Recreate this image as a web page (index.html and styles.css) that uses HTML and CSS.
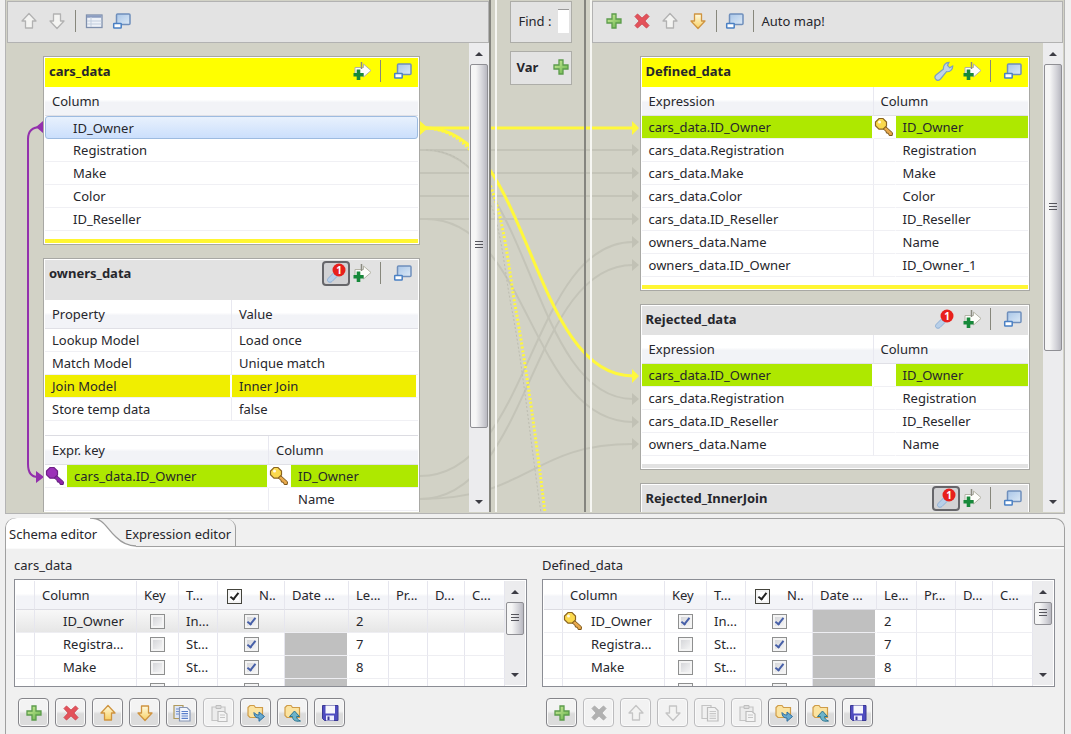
FILE: index.html
```html
<!DOCTYPE html>
<html lang="en">
<head>
    <meta charset="UTF-8">
    <meta name="viewport" content="width=device-width, initial-scale=1.0">
    <title>Map editor</title>
    <link rel="stylesheet" href="styles.css">
</head>
<body>
    <!-- icon set -->
    <svg class="sprite" aria-hidden="true">
        <defs>
            <linearGradient id="gGold" x1="0" y1="0" x2="0" y2="1">
                <stop offset="0" stop-color="#fffbe0"/><stop offset="1" stop-color="#f8cf62"/>
            </linearGradient>
            <linearGradient id="gBlue" x1="0" y1="0" x2="1" y2="1">
                <stop offset="0" stop-color="#a9c6e8"/><stop offset="1" stop-color="#dce9f6"/>
            </linearGradient>
            <linearGradient id="gGreen" x1="0" y1="0" x2="1" y2="1">
                <stop offset="0" stop-color="#d6f0a0"/><stop offset="1" stop-color="#5fb045"/>
            </linearGradient>
        </defs>
        <symbol id="plus" viewBox="0 0 20 20">
            <path d="M8 3h4v5h5v4h-5v5H8v-5H3V8h5z" fill="url(#gGreen)" stroke="#5c9c4c" stroke-width="1.3"/>
        </symbol>
        <symbol id="cross" viewBox="0 0 20 20">
            <path d="M3 5.500L5.500 3 10 7.200 14.500 3 17 5.500 12.800 10 17 14.500 14.500 17 10 12.800 5.500 17 3 14.500 7.200 10z" fill="#e4525a" stroke="#cf4650" stroke-width="1"/>
        </symbol>
        <symbol id="up" viewBox="0 0 20 20">
            <path d="M10 2.500L17 10h-3.500v7h-7v-7H3z" fill="#f4f4f2" stroke="#b2b2b2" stroke-width="1.300" stroke-linejoin="round"/>
        </symbol>
        <symbol id="down" viewBox="0 0 20 20">
            <path d="M10 17.500L3 10h3.500V3h7v7H17z" fill="#f4f4f2" stroke="#b2b2b2" stroke-width="1.300" stroke-linejoin="round"/>
        </symbol>
        <symbol id="up-gold" viewBox="0 0 20 20">
            <path d="M10 2.500L17 10h-3.500v7h-7v-7H3z" fill="url(#gGold)" stroke="#cf9440" stroke-width="1.300" stroke-linejoin="round"/>
        </symbol>
        <symbol id="down-gold" viewBox="0 0 20 20">
            <path d="M10 17.500L3 10h3.500V3h7v7H17z" fill="url(#gGold)" stroke="#cf9440" stroke-width="1.300" stroke-linejoin="round"/>
        </symbol>
        <symbol id="grid" viewBox="0 0 20 20">
            <rect x="2.500" y="4" width="15.500" height="12.500" fill="#eef2f8" stroke="#7f90ad" stroke-width="1.300"/>
            <path d="M3 5.500h14.500" stroke="#8b9cc0" stroke-width="2.500"/>
            <path d="M7 6v10M3 10h14.500M3 13h14.500" stroke="#c3cede" stroke-width="1"/>
        </symbol>
        <symbol id="restore" viewBox="0 0 20 20">
            <rect x="4.500" y="3" width="13.500" height="10.500" rx="1" fill="url(#gBlue)" stroke="#6f8fbc" stroke-width="1.500"/>
            <rect x="1.700" y="12.500" width="7.500" height="4.500" rx=".5" fill="#fff" stroke="#4a80c4" stroke-width="1.500"/>
        </symbol>
        <symbol id="addout" viewBox="0 0 20 20">
            <path d="M3 6.500h8.500V3L19 9.500l-7.500 6.500v-3.500H3z" fill="#fdfdfa" stroke="#b3b3a6" stroke-width="1"/>
            <path d="M9.500 1v7" stroke="#8b8b80" stroke-width="1.500"/>
            <path d="M6.500 8.500v10.500M1.500 13.700h10" stroke="#16893a" stroke-width="3.600"/>
        </symbol>
        <symbol id="wrench" viewBox="0 0 20 20">
            <path d="M2 18.500C.5 17 .5 15.500 2 14L9.500 8C9 4.500 11.500 1.300 15 1.300l-1.500 3.200 2.200 2.300 3-1.800c.3 3.500-2.900 6.200-6.200 5.700L6.500 18c-1.500 1.600-3 2-4.500.5z" fill="#c0d4e8" stroke="#7d9fbe" stroke-width="1.200"/>
        </symbol>
        <symbol id="badge" viewBox="0 0 20 20">
            <path d="M2 18.500c-1-1-.5-2.500.5-3.500l5-5 3.500 3.500-5 5c-1 1-3 1-4 0z" fill="#b8cfe8" stroke="#8fb0d6" stroke-width="1"/>
            <circle cx="13" cy="7" r="6.500" fill="#e8201c"/>
        </symbol>
        <symbol id="key" viewBox="0 0 20 20">
            <path d="M8.500 11.500l2.500-2.500 7.500 6.800-.3 2.700h-3l-.8-2.200-1.900-.2-.6-2z" fill="#e9a94c" stroke="#7b5618" stroke-width="1"/>
            <path d="M5 1.500h4L12.500 5v4L9 12.200H5L1.500 8.700V5z" fill="#fbd94d" stroke="#8a6420" stroke-width="1.200"/>
            <circle cx="5.500" cy="5" r="1.500" fill="#fffbe8"/>
        </symbol>
        <symbol id="key-purple" viewBox="0 0 20 20">
            <path d="M8.500 11.500l2.500-2.500 7.500 6.800-.3 2.700h-3l-.8-2.200-1.900-.2-.6-2z" fill="#8f24ac" stroke="#5d1c7a" stroke-width="1"/>
            <path d="M5 1.500h4L12.500 5v4L9 12.200H5L1.500 8.700V5z" fill="#9b30b8" stroke="#6d2088" stroke-width="1.200"/>
        </symbol>
        <symbol id="copy" viewBox="0 0 20 20">
            <path d="M2 2.500h9v13H2z" fill="#dfe7f6" stroke="#b09a5c" stroke-width="1.200"/>
            <path d="M4 6h3M4 8.500h3M4 11h3" stroke="#6e8ed0" stroke-width="1.200"/>
            <path d="M7.500 4.500H15l3 3v10.500H7.500z" fill="#f2f6fd" stroke="#8796b4" stroke-width="1.200"/>
            <path d="M9.500 8.500h6.500M9.500 10.700h6.500M9.500 13h6.500M9.500 15.300h6.500" stroke="#5a7fcb" stroke-width="1.200"/>
        </symbol>
        <symbol id="copy-off" viewBox="0 0 20 20">
            <path d="M2 2.500h9v13H2z" fill="#f0f0f0" stroke="#c4c4c4" stroke-width="1.200"/>
            <path d="M7.500 4.500H15l3 3v10.500H7.500z" fill="#f2f2f2" stroke="#bdbdbd" stroke-width="1.200"/>
            <path d="M9.500 8.500h6.500M9.500 10.700h6.500M9.500 13h6.500M9.500 15.300h6.500" stroke="#c9c9c9" stroke-width="1.200"/>
        </symbol>
        <symbol id="paste-off" viewBox="0 0 20 20">
            <path d="M3 4h13v13.500H3z" fill="#ececec" stroke="#c4c4c4" stroke-width="1.200"/>
            <path d="M7 2.500h5v3H7z" fill="#ddd" stroke="#bebebe" stroke-width="1"/>
            <path d="M9 8.500h6l3 2.500v7.500H9z" fill="#f4f4f4" stroke="#bdbdbd" stroke-width="1.200"/>
            <path d="M11 12h5M11 14.500h5" stroke="#c6c6c6" stroke-width="1.200"/>
        </symbol>
        <symbol id="import" viewBox="0 0 20 20">
            <path d="M2 4.500L4 2.500h4l1.500 2H16.500v10H4L2 12.500z" fill="#fbe3a0" stroke="#cf9c48" stroke-width="1.200"/>
            <path d="M8 9.500c0 4 2 5.500 5 5.500v3.300l5.500-4.800-5.500-4.500v3c-2.500 0-3.500-.8-5-2.500z" fill="#67a9cf" stroke="#2f6f9f" stroke-width="1"/>
        </symbol>
        <symbol id="export" viewBox="0 0 20 20">
            <path d="M2 4.500L4 2.500h4l1.500 2H16.500v10H4L2 12.500z" fill="#fbe3a0" stroke="#cf9c48" stroke-width="1.200"/>
            <path d="M17.500 18c-6 1-8-1.500-8-4.500H6.500L11.500 8l5 5.500h-3c0 2 1.500 3.500 4 4.500z" fill="#6cb3c9" stroke="#2c7590" stroke-width="1"/>
        </symbol>
        <symbol id="save" viewBox="0 0 20 20">
            <path d="M2.500 2.500h15.500v15H4.500l-2-2z" fill="#4f4cc0" stroke="#3a3894" stroke-width="1"/>
            <path d="M5.500 2.500h9.500v8h-9.500z" fill="#f6f6fc"/>
            <path d="M6 12.500h8v5H6z" fill="#eef"/>
            <path d="M7.500 13.500h2v3.500h-2z" fill="#3a3894"/>
        </symbol>
        <symbol id="tri-up" viewBox="0 0 8 4"><path d="M4 0l4 4H0z" fill="#3c3c44"/></symbol>
        <symbol id="tri-down" viewBox="0 0 8 4"><path d="M0 0h8L4 4z" fill="#3c3c44"/></symbol>
    </svg>

    <main class="mapper">
        <!-- links between the tables -->
        <svg class="wires" viewBox="6 0 1058 513" preserveAspectRatio="none" aria-hidden="true">
            <defs>
                <marker id="headGray" markerUnits="userSpaceOnUse" markerWidth="7" markerHeight="12" refX="1" refY="6" orient="0">
                    <path d="M0 0l7 6-7 6z" fill="#c1c1b5"/>
                </marker>
                <marker id="headYellow" markerUnits="userSpaceOnUse" markerWidth="7" markerHeight="14" refX="1" refY="7" orient="0">
                    <path d="M0 0l7 7-7 7z" fill="#fff83c"/>
                </marker>
            </defs>
            <g class="wire gray">
                <path d="M420 150H633"/>
                <path d="M420 173H633"/>
                <path d="M420 196H633"/>
                <path d="M420 219H633"/>
                <path d="M426 150C530 150 530 399 633 399"/>
                <path d="M426 219C530 219 530 422 633 422"/>
                <path d="M420 476C530 476 530 242 633 242"/>
                <path d="M420 499C530 499 530 265 633 265"/>
                <path d="M420 499C530 499 530 444 633 444"/>
            </g>
            <path class="wire gray-dots" d="M426 150C500 152 500 250 511 305S529 430 541 513"/>
            <g class="wire yellow">
                <path d="M420 128H633"/>
                <path d="M426 128C530 128 530 376 633 376"/>
            </g>
            <path class="wire yellow-dots" d="M426 128C500 132 505 250 515 305S535 430 545 513"/>
            <path d="M420 121l8 7-8 7z" fill="#fff83c"/>
            <path class="wire purple" d="M41 127C33 127 28 131 28 139V464C28 473 31 477 38 477"/>
            <path d="M43 121v12l-7-6zM36 471l8 6-8 6z" fill="#9330ad"/>
        </svg>

        <section class="pane inputs">
            <div class="toolbar">
                <button class="tool" aria-label="Move up"><svg><use href="#up"/></svg></button>
                <button class="tool" aria-label="Move down"><svg><use href="#down"/></svg></button>
                <span class="sep"></span>
                <button class="tool" aria-label="Show columns"><svg><use href="#grid"/></svg></button>
                <button class="tool" aria-label="Minimize tables"><svg><use href="#restore"/></svg></button>
            </div>
            <div class="scroll-area">
                <div class="cards">
                    <article class="card selected">
                        <header class="card-title">
                            <h2>cars_data</h2>
                            <button class="tool" aria-label="Add column"><svg><use href="#addout"/></svg></button>
                            <span class="sep"></span>
                            <button class="tool" aria-label="Minimize"><svg><use href="#restore"/></svg></button>
                        </header>
                        <table class="fields">
                            <thead><tr><th>Column</th></tr></thead>
                            <tbody class="indent">
                                <tr class="active"><td>ID_Owner</td></tr>
                                <tr><td>Registration</td></tr>
                                <tr><td>Make</td></tr>
                                <tr><td>Color</td></tr>
                                <tr><td>ID_Reseller</td></tr>
                            </tbody>
                        </table>
                        <div class="strip"></div>
                    </article>

                    <article class="card">
                        <header class="card-title tall">
                            <h2>owners_data</h2>
                            <button class="tool pressed" aria-label="Settings"><svg viewBox="0 0 20 20"><use href="#badge"/><text x="13" y="11" text-anchor="middle" class="badge-text">1</text></svg></button>
                            <button class="tool" aria-label="Add column"><svg><use href="#addout"/></svg></button>
                            <span class="sep"></span>
                            <button class="tool" aria-label="Minimize"><svg><use href="#restore"/></svg></button>
                        </header>
                        <table class="fields props">
                            <colgroup><col class="c-prop"><col></colgroup>
                            <thead><tr><th>Property</th><th>Value</th></tr></thead>
                            <tbody>
                                <tr><td>Lookup Model</td><td>Load once</td></tr>
                                <tr><td>Match Model</td><td>Unique match</td></tr>
                                <tr class="changed"><td>Join Model</td><td>Inner Join</td></tr>
                                <tr><td>Store temp data</td><td>false</td></tr>
                            </tbody>
                        </table>
                        <table class="fields keys">
                            <colgroup><col class="c-icon"><col class="c-key"><col class="c-icon"><col></colgroup>
                            <thead><tr><th colspan="2">Expr. key</th><th colspan="2">Column</th></tr></thead>
                            <tbody>
                                <tr>
                                    <td class="icon"><svg><use href="#key-purple"/></svg></td>
                                    <td class="hit">cars_data.ID_Owner</td>
                                    <td class="icon"><svg><use href="#key"/></svg></td>
                                    <td class="hit">ID_Owner</td>
                                </tr>
                                <tr><td class="icon"></td><td></td><td class="icon"></td><td>Name</td></tr>
                            </tbody>
                        </table>
                    </article>
                </div>
                <div class="scrollbar">
                    <svg><use href="#tri-up"/></svg>
                    <div class="track"><div class="thumb long"><i></i></div></div>
                    <svg><use href="#tri-down"/></svg>
                </div>
            </div>
        </section>

        <div class="sash"></div>

        <section class="pane vars">
            <div class="box find">
                <label for="find">Find :</label>
                <input type="text" id="find">
            </div>
            <div class="box var">
                <h2>Var</h2>
                <button class="tool" aria-label="Add variable"><svg><use href="#plus"/></svg></button>
            </div>
        </section>

        <div class="sash"></div>

        <section class="pane outputs">
            <div class="toolbar">
                <button class="tool" aria-label="Add output"><svg><use href="#plus"/></svg></button>
                <button class="tool" aria-label="Remove output"><svg><use href="#cross"/></svg></button>
                <button class="tool" aria-label="Move up"><svg><use href="#up"/></svg></button>
                <button class="tool" aria-label="Move down"><svg><use href="#down-gold"/></svg></button>
                <span class="sep"></span>
                <button class="tool" aria-label="Minimize tables"><svg><use href="#restore"/></svg></button>
                <span class="sep"></span>
                <button class="tool">Auto map!</button>
            </div>
            <div class="scroll-area">
                <div class="cards">
                    <article class="card selected">
                        <header class="card-title">
                            <h2>Defined_data</h2>
                            <button class="tool" aria-label="Settings"><svg><use href="#wrench"/></svg></button>
                            <button class="tool" aria-label="Add column"><svg><use href="#addout"/></svg></button>
                            <span class="sep"></span>
                            <button class="tool" aria-label="Minimize"><svg><use href="#restore"/></svg></button>
                        </header>
                        <table class="fields">
                            <colgroup><col class="c-expr"><col class="c-icon"><col></colgroup>
                            <thead><tr><th>Expression</th><th colspan="2">Column</th></tr></thead>
                            <tbody>
                                <tr><td class="hit">cars_data.ID_Owner</td><td class="icon"><svg><use href="#key"/></svg></td><td class="hit">ID_Owner</td></tr>
                                <tr><td>cars_data.Registration</td><td class="icon"></td><td>Registration</td></tr>
                                <tr><td>cars_data.Make</td><td class="icon"></td><td>Make</td></tr>
                                <tr><td>cars_data.Color</td><td class="icon"></td><td>Color</td></tr>
                                <tr><td>cars_data.ID_Reseller</td><td class="icon"></td><td>ID_Reseller</td></tr>
                                <tr><td>owners_data.Name</td><td class="icon"></td><td>Name</td></tr>
                                <tr><td>owners_data.ID_Owner</td><td class="icon"></td><td>ID_Owner_1</td></tr>
                            </tbody>
                        </table>
                        <div class="strip"></div>
                    </article>

                    <article class="card">
                        <header class="card-title">
                            <h2>Rejected_data</h2>
                            <button class="tool" aria-label="Settings"><svg viewBox="0 0 20 20"><use href="#badge"/><text x="13" y="11" text-anchor="middle" class="badge-text">1</text></svg></button>
                            <button class="tool" aria-label="Add column"><svg><use href="#addout"/></svg></button>
                            <span class="sep"></span>
                            <button class="tool" aria-label="Minimize"><svg><use href="#restore"/></svg></button>
                        </header>
                        <table class="fields">
                            <colgroup><col class="c-expr"><col class="c-icon"><col></colgroup>
                            <thead><tr><th>Expression</th><th colspan="2">Column</th></tr></thead>
                            <tbody>
                                <tr><td class="hit">cars_data.ID_Owner</td><td class="icon"></td><td class="hit">ID_Owner</td></tr>
                                <tr><td>cars_data.Registration</td><td class="icon"></td><td>Registration</td></tr>
                                <tr><td>cars_data.ID_Reseller</td><td class="icon"></td><td>ID_Reseller</td></tr>
                                <tr><td>owners_data.Name</td><td class="icon"></td><td>Name</td></tr>
                            </tbody>
                        </table>
                        <div class="strip"></div>
                    </article>

                    <article class="card">
                        <header class="card-title">
                            <h2>Rejected_InnerJoin</h2>
                            <button class="tool pressed" aria-label="Settings"><svg viewBox="0 0 20 20"><use href="#badge"/><text x="13" y="11" text-anchor="middle" class="badge-text">1</text></svg></button>
                            <button class="tool" aria-label="Add column"><svg><use href="#addout"/></svg></button>
                            <span class="sep"></span>
                            <button class="tool" aria-label="Minimize"><svg><use href="#restore"/></svg></button>
                        </header>
                    </article>
                </div>
                <div class="scrollbar">
                    <svg><use href="#tri-up"/></svg>
                    <div class="track"><div class="thumb medium"><i></i></div></div>
                    <svg><use href="#tri-down"/></svg>
                </div>
            </div>
        </section>
    </main>

    <section class="editor">
        <div class="tabs">
            <button class="tab current">
                <svg viewBox="0 0 130 30" aria-hidden="true">
                    <path d="M0 30V10Q1 0 11 0H84C98 0 100 10 110 19Q119 28 130 28V30z" fill="#fff"/>
                    <path d="M84 0C98 0 100 10 110 19Q119 28 130 28" fill="none" stroke="#9b9b9b" stroke-width="1.300"/>
                </svg>
                <span>Schema editor</span>
            </button>
            <button class="tab">Expression editor</button>
        </div>
        <div class="schemas">
            <div class="schema">
                <h3>cars_data</h3>
                <div class="grid-box">
                    <table class="grid">
                        <colgroup><col class="g-mark"><col class="g-name"><col class="g-key"><col class="g-type"><col class="g-null"><col class="g-date"><col class="g-len"><col class="g-prec"><col class="g-def"><col class="g-com"></colgroup>
                        <thead>
                            <tr><th></th><th>Column</th><th>Key</th><th>T...</th><th class="nullable"><input type="checkbox" checked aria-label="All nullable">N..</th><th>Date ...</th><th>Le...</th><th>Pr...</th><th>D...</th><th>C...</th></tr>
                        </thead>
                        <tbody>
                            <tr class="current-row"><td></td><td class="name">ID_Owner</td><td class="check"><input type="checkbox" aria-label="Key"></td><td>In...</td><td class="check"><input type="checkbox" checked aria-label="Nullable"></td><td></td><td>2</td><td></td><td></td><td></td></tr>
                            <tr><td></td><td class="name">Registra...</td><td class="check"><input type="checkbox" aria-label="Key"></td><td>St...</td><td class="check"><input type="checkbox" checked aria-label="Nullable"></td><td class="off"></td><td>7</td><td></td><td></td><td></td></tr>
                            <tr><td></td><td class="name">Make</td><td class="check"><input type="checkbox" aria-label="Key"></td><td>St...</td><td class="check"><input type="checkbox" checked aria-label="Nullable"></td><td class="off"></td><td>8</td><td></td><td></td><td></td></tr>
                            <tr><td></td><td class="name"></td><td class="check"><input type="checkbox" aria-label="Key"></td><td></td><td class="check"><input type="checkbox" checked aria-label="Nullable"></td><td class="off"></td><td></td><td></td><td></td><td></td></tr>
                        </tbody>
                    </table>
                    <div class="scrollbar">
                        <svg><use href="#tri-up"/></svg>
                        <div class="track"><div class="thumb"><i></i></div></div>
                        <svg><use href="#tri-down"/></svg>
                    </div>
                </div>
                <div class="actions">
                    <button aria-label="Add"><svg><use href="#plus"/></svg></button>
                    <button aria-label="Remove"><svg><use href="#cross"/></svg></button>
                    <button aria-label="Move up"><svg><use href="#up-gold"/></svg></button>
                    <button aria-label="Move down"><svg><use href="#down-gold"/></svg></button>
                    <button aria-label="Copy"><svg><use href="#copy"/></svg></button>
                    <button aria-label="Paste" disabled><svg><use href="#paste-off"/></svg></button>
                    <button aria-label="Import"><svg><use href="#import"/></svg></button>
                    <button aria-label="Export"><svg><use href="#export"/></svg></button>
                    <button aria-label="Save"><svg><use href="#save"/></svg></button>
                </div>
            </div>

            <div class="schema">
                <h3>Defined_data</h3>
                <div class="grid-box">
                    <table class="grid">
                        <colgroup><col class="g-mark"><col class="g-name"><col class="g-key"><col class="g-type"><col class="g-null"><col class="g-date"><col class="g-len"><col class="g-prec"><col class="g-def"><col class="g-com"></colgroup>
                        <thead>
                            <tr><th></th><th>Column</th><th>Key</th><th>T...</th><th class="nullable"><input type="checkbox" checked aria-label="All nullable">N..</th><th>Date ...</th><th>Le...</th><th>Pr...</th><th>D...</th><th>C...</th></tr>
                        </thead>
                        <tbody>
                            <tr><td></td><td class="name with-key"><svg><use href="#key"/></svg>ID_Owner</td><td class="check"><input type="checkbox" checked aria-label="Key"></td><td>In...</td><td class="check"><input type="checkbox" checked aria-label="Nullable"></td><td class="off"></td><td>2</td><td></td><td></td><td></td></tr>
                            <tr><td></td><td class="name">Registra...</td><td class="check"><input type="checkbox" aria-label="Key"></td><td>St...</td><td class="check"><input type="checkbox" checked aria-label="Nullable"></td><td class="off"></td><td>7</td><td></td><td></td><td></td></tr>
                            <tr><td></td><td class="name">Make</td><td class="check"><input type="checkbox" aria-label="Key"></td><td>St...</td><td class="check"><input type="checkbox" checked aria-label="Nullable"></td><td class="off"></td><td>8</td><td></td><td></td><td></td></tr>
                            <tr><td></td><td class="name"></td><td class="check"><input type="checkbox" aria-label="Key"></td><td></td><td class="check"><input type="checkbox" checked aria-label="Nullable"></td><td class="off"></td><td></td><td></td><td></td><td></td></tr>
                        </tbody>
                    </table>
                    <div class="scrollbar">
                        <svg><use href="#tri-up"/></svg>
                        <div class="track"><div class="thumb short"><i></i></div></div>
                        <svg><use href="#tri-down"/></svg>
                    </div>
                </div>
                <div class="actions">
                    <button aria-label="Add"><svg><use href="#plus"/></svg></button>
                    <button aria-label="Remove" disabled><svg class="mute"><use href="#cross"/></svg></button>
                    <button aria-label="Move up" disabled><svg class="faint"><use href="#up"/></svg></button>
                    <button aria-label="Move down" disabled><svg class="faint"><use href="#down"/></svg></button>
                    <button aria-label="Copy" disabled><svg><use href="#copy-off"/></svg></button>
                    <button aria-label="Paste" disabled><svg><use href="#paste-off"/></svg></button>
                    <button aria-label="Import"><svg><use href="#import"/></svg></button>
                    <button aria-label="Export"><svg><use href="#export"/></svg></button>
                    <button aria-label="Save"><svg><use href="#save"/></svg></button>
                </div>
            </div>
        </div>
    </section>
</body>
</html>
```
FILE: styles.css
```css
* {
    box-sizing: border-box;
}
body {
    margin: 0;
    padding: 0 6px 0 5px;
    height: 100vh;
    display: flex;
    flex-direction: column;
    overflow: hidden;
    background: #f0f0f0;
    color: #26262c;
    font-family: "Noto Sans", "Open Sans", sans-serif;
    font-size: 13px;
    line-height: 20px;
}
h2, h3 {
    margin: 0;
    font-size: 13px;
    line-height: 20px;
}
h3 {
    font-weight: normal;
}
button {
    font: inherit;
    color: inherit;
    cursor: pointer;
}
.sprite {
    position: absolute;
    width: 0;
    height: 0;
}
.badge-text {
    font-size: 10px;
    font-weight: bold;
    fill: #fff;
}

/* mapper */
.mapper {
    position: relative;
    flex: 1;
    min-height: 0;
    display: grid;
    grid-template-columns: minmax(0, 482fr) 8px minmax(0, 86fr) 8px minmax(0, 471fr);
    grid-template-rows: minmax(0, 1fr);
    margin-bottom: 4px;
    padding: 0 1px 1px;
    border: 1px solid #b4b4b4;
    border-top: none;
    background: #d2d2c6;
    overflow: hidden;
}
.wires {
    position: absolute;
    left: 0;
    top: 0;
    width: 100%;
    height: 100%;
}
.wire {
    fill: none;
}
.gray {
    stroke: #c4c4b8;
    stroke-width: 2;
}
.gray path {
    marker-end: url(#headGray);
}
.gray-dots {
    stroke: #bdbdb1;
    stroke-width: 1;
    stroke-dasharray: 2 2;
}
.yellow {
    stroke: #fff83c;
    stroke-width: 3;
}
.yellow path {
    marker-end: url(#headYellow);
}
.yellow-dots {
    stroke: #fff83c;
    stroke-width: 3;
    stroke-dasharray: 2 2;
}
.purple {
    stroke: #9330ad;
    stroke-width: 2;
}
.pane {
    position: relative;
    display: flex;
    flex-direction: column;
    min-width: 0;
}
.vars {
    padding: 1px 12px 0 13px;
    gap: 8px;
}
.sash {
    position: relative;
    border-left: 2px solid #85857f;
    border-right: 2px solid #f6f6f2;
}
.toolbar {
    display: flex;
    align-items: center;
    gap: 8px;
    height: 42px;
    margin-top: 1px;
    padding: 0 11px 2px;
    border: 1px solid #b2b2b2;
    background: #e3e3e3;
}
.tool {
    display: flex;
    align-items: center;
    justify-content: center;
    padding: 0;
    border: none;
    background: none;
}
.tool svg {
    width: 20px;
    height: 20px;
}
.tool.pressed {
    width: 28px;
    height: 25px;
    border: 2px solid #66666a;
    border-radius: 4px;
    background: #d2d2d4;
}
.sep {
    width: 1px;
    height: 22px;
    background: #87877c;
}
.scroll-area {
    flex: 1;
    min-height: 0;
    display: flex;
}
.cards {
    flex: 1;
    min-width: 0;
    display: flex;
    flex-direction: column;
    gap: 13px;
    padding: 13px 49px 0 36px;
    overflow: hidden;
}
.outputs .cards {
    padding: 13px 13px 0 48px;
}
.card {
    flex: none;
    padding: 1px;
    border: 1px solid #a8a8a4;
    background: #fff;
}
.card-title {
    display: flex;
    align-items: center;
    gap: 8px;
    height: 29px;
    padding: 0 5px 3px 4px;
    background: #e2e2e2;
}
.card-title.tall {
    height: 40px;
    padding-bottom: 14px;
}
.card-title h2 {
    flex: 1;
}
.card-title .pressed {
    margin-right: -6px;
}
.card-title .sep {
    margin-right: 4px;
}
.selected .card-title {
    background: #ff0;
}
.strip {
    height: 4px;
    margin-top: 8px;
    background: #e2e2e2;
}
.selected .strip {
    background: #fff632;
}

/* tables inside the cards */
.fields {
    width: 100%;
    table-layout: fixed;
    border-collapse: separate;
    border-spacing: 0;
}
.fields th {
    height: 29px;
    padding: 0 7px;
    border-bottom: 1px solid #e0e0e6;
    border-right: 1px solid #e8e8f0;
    background: linear-gradient(#fff 45%, #f2f3f7 55%);
    font-weight: normal;
    text-align: left;
}
.fields td {
    height: 23px;
    padding: 0 7px;
    border-bottom: 1px solid #f0f0f4;
    border-right: 1px solid #ececf2;
    white-space: nowrap;
}
.fields th:last-child, .fields td:last-child {
    border-right: none;
}
.fields .indent td {
    padding-left: 28px;
}
.fields .indent .active td {
    border: 1px solid #9dbbe0;
    border-radius: 3px;
    padding-left: 27px;
    background: linear-gradient(#e8f1fd, #cbdffc);
}
.fields .icon {
    padding: 0;
    border-right-color: #fff;
}
.fields .icon svg {
    display: block;
    width: 20px;
    height: 20px;
}
.fields .hit, .fields .changed td {
    background: #aee800;
    background-clip: padding-box;
    border-right: 2px solid #fff;
}
.fields .changed td {
    background-color: #f0ee00;
}
.c-prop {
    width: 187px;
}
.c-expr {
    width: 232px;
}
.c-icon {
    width: 22px;
}
.c-key {
    width: 202px;
}
.keys {
    margin-top: 14px;
    border-top: 1px solid #dcdce2;
}

/* scrollbars */
.scrollbar {
    position: relative;
    flex: none;
    width: 20px;
    display: flex;
    flex-direction: column;
    align-items: center;
    gap: 8px;
    padding: 9px 1px 8px;
    background: #ececee;
}
.scrollbar svg {
    flex: none;
    width: 8px;
    height: 4px;
}
.track {
    flex: 1;
    align-self: stretch;
}
.thumb {
    display: flex;
    align-items: center;
    justify-content: center;
    height: 52%;
    border: 1px solid #8f8f94;
    border-radius: 2px;
    background: linear-gradient(90deg, #f6f6f6 30%, #d0d0d6 75%, #b8b8c0);
}
.thumb i {
    width: 8px;
    height: 9px;
    background: repeating-linear-gradient(#55555c 0 1px, transparent 1px 3px);
}
.thumb.long {
    height: 85%;
}
.thumb.medium {
    height: 67%;
}
.thumb.short {
    height: 36%;
}

/* middle column */
.box {
    display: flex;
    align-items: center;
    border: 1px solid #adada8;
    background: #e3e3e3;
}
.find {
    height: 42px;
    padding: 0 2px 2px 7px;
    gap: 7px;
}
.find label {
    white-space: nowrap;
}
.find input {
    flex: 1;
    width: 0;
    min-width: 0;
    height: 24px;
    padding: 0;
    border: none;
    border-top: 1px solid #999;
    background: #fff;
}
.var {
    height: 34px;
    justify-content: space-between;
    padding: 0 0 2px 5px;
}

/* schema editor */
.editor {
    flex: none;
    border: 1px solid #a0a0a0;
    border-bottom: none;
    border-radius: 10px 10px 0 0;
    background: #f0f0f0;
}
.tabs {
    display: flex;
    height: 28px;
    border-bottom: 1px solid #a0a0a0;
}
.tab {
    position: relative;
    padding: 2px 4px 0;
    border: none;
    border-right: 1px solid #a0a0a0;
    border-radius: 0 9px 0 0;
    background: none;
    white-space: nowrap;
}
.tab.current {
    width: 115px;
    padding: 2px 3px 0;
    border: none;
    text-align: left;
}
.tab.current svg {
    position: absolute;
    left: 0;
    top: -1px;
    width: 130px;
    height: 30px;
}
.tab.current span {
    position: relative;
}
.schemas {
    display: flex;
    gap: 15px;
    padding: 6px 9px 7px 8px;
    border-top: 2px solid #fafafa;
}
.schema {
    flex: 1;
    min-width: 0;
}
.grid-box {
    display: flex;
    align-items: flex-start;
    height: 108px;
    margin-top: 4px;
    padding: 1px;
    border: 1px solid #8b8d94;
    background: #fff;
    overflow: hidden;
}
.grid-box .scrollbar {
    align-self: stretch;
}
.grid {
    flex: 1;
    min-width: 0;
    table-layout: fixed;
    border-spacing: 0;
}
.grid th {
    height: 29px;
    padding: 0 0 0 7px;
    border-right: 1px solid #e6e6ee;
    border-bottom: 1px solid #dcdce2;
    background: linear-gradient(#fff 45%, #f3f4f8 55%);
    font-weight: normal;
    text-align: left;
    white-space: nowrap;
}
.grid td {
    height: 23px;
    padding: 0 0 0 7px;
    border-right: 1px solid #e6e6ee;
    border-bottom: 1px solid #eeeef2;
    white-space: nowrap;
}
.grid .name {
    padding-left: 28px;
}
.grid .with-key {
    padding-left: 0;
}
.with-key svg {
    float: left;
    width: 20px;
    height: 20px;
    margin-right: 8px;
}
.grid .check {
    padding: 0;
}
.grid .check input {
    display: block;
    margin: 0 auto;
}
.grid .off {
    background: #c0c0c0;
    background-clip: padding-box;
    border-right: 2px solid #fff;
}
.current-row td {
    background: linear-gradient(#f8f8f8, #e6e6e6);
}
.g-mark { width: 19px; }
.g-name { width: 102px; }
.g-key { width: 42px; }
.g-type { width: 39px; }
.g-null { width: 67px; }
.g-date { width: 64px; }
.g-len { width: 40px; }
.g-prec { width: 39px; }
.g-def { width: 37px; }
.g-com { width: 40px; }
input[type="checkbox"] {
    appearance: none;
    position: relative;
    width: 15px;
    height: 15px;
    margin: 0;
    border: 1px solid #8e8f8f;
    background: linear-gradient(135deg, #cfd0d4, #fafafa);
    box-shadow: inset 0 0 0 2px #f4f4f4;
    vertical-align: middle;
}
input[type="checkbox"]:checked::after {
    content: "";
    position: absolute;
    left: 4px;
    top: 1px;
    width: 3px;
    height: 7px;
    border: solid #465fa8;
    border-width: 0 2px 2px 0;
    transform: rotate(38deg);
}
.nullable input[type="checkbox"] {
    margin: 0 17px 0 2px;
    border-color: #44443c;
    background: #fff;
}
.nullable input[type="checkbox"]:checked::after {
    border-color: #222;
}
.actions {
    display: flex;
    gap: 6px;
    margin-top: 11px;
    padding-left: 4px;
}
.actions button {
    display: flex;
    align-items: center;
    justify-content: center;
    width: 31px;
    height: 29px;
    padding: 0;
    border: 1px solid #85858a;
    border-radius: 4px;
    background: linear-gradient(#f3f3f3 45%, #dcdcdc 55%);
    box-shadow: inset 0 0 0 1px #fafafa;
}
.actions button:disabled {
    border-color: #bcbcbe;
    background: #f2f2f2;
    cursor: default;
}
.actions svg {
    width: 20px;
    height: 20px;
}
.mute {
    filter: grayscale(1);
    opacity: 0.5;
}
.faint {
    opacity: 0.7;
}
```
